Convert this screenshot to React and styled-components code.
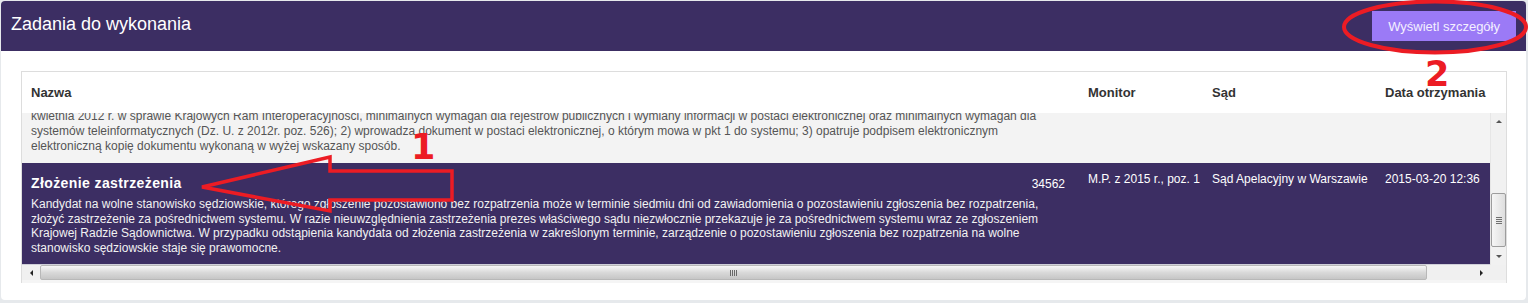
import styled, { createGlobalStyle } from "styled-components";

const GlobalStyle = createGlobalStyle`
    html, body {
        margin: 0;
        background: #e6e9ec;
        font-family: "Liberation Sans", Arial, sans-serif;
    }
`;

const previousRowLines = [
    "kwietnia 2012 r. w sprawie Krajowych Ram Interoperacyjności, minimalnych wymagań dla rejestrów publicznych i wymiany informacji w postaci elektronicznej oraz minimalnych wymagań dla",
    "systemów teleinformatycznych  (Dz. U. z 2012r. poz. 526); 2) wprowadza dokument w postaci elektronicznej, o którym mowa w pkt 1 do systemu; 3) opatruje podpisem elektronicznym",
    "elektroniczną kopię dokumentu wykonaną w wyżej wskazany sposób."
];

const selectedRow = {
    title: "Złożenie zastrzeżenia",
    number: "34562",
    monitor: "M.P. z 2015 r., poz. 1",
    court: "Sąd Apelacyjny w Warszawie",
    date: "2015-03-20 12:36",
    lines: [
        "Kandydat na wolne stanowisko sędziowskie, którego zgłoszenie pozostawiono bez rozpatrzenia może w terminie siedmiu dni od zawiadomienia o pozostawieniu zgłoszenia bez rozpatrzenia,",
        "złożyć zastrzeżenie za pośrednictwem systemu. W razie nieuwzględnienia zastrzeżenia prezes właściwego sądu niezwłocznie przekazuje je za pośrednictwem systemu wraz ze zgłoszeniem",
        "Krajowej Radzie Sądownictwa. W przypadku odstąpienia kandydata od złożenia zastrzeżenia w zakreślonym terminie, zarządzenie o pozostawieniu zgłoszenia bez rozpatrzenia na wolne",
        "stanowisko sędziowskie staje się prawomocne."
    ]
};

const App = () => {
    return (
        <Page>
            <GlobalStyle />
            <Panel>
                <Header>
                    <Title>Zadania do wykonania</Title>
                    <DetailsButton>Wyświetl szczegóły</DetailsButton>
                </Header>
                <Body>
                    <Table>
                        <HeadRow>
                            <HeadCell>Nazwa</HeadCell>
                            <HeadCell>Monitor</HeadCell>
                            <HeadCell>Sąd</HeadCell>
                            <HeadCell>Data otrzymania</HeadCell>
                        </HeadRow>
                        <Viewport>
                            <Rows>
                                <Row>
                                    <NameCell>
                                        {previousRowLines.map((line) => (
                                            <Line key={line}>{line}</Line>
                                        ))}
                                    </NameCell>
                                    <Cell />
                                    <Cell />
                                    <Cell />
                                </Row>
                                <Row selected>
                                    <NameCell selected>
                                        <NameTop>
                                            <RowTitle>{selectedRow.title}</RowTitle>
                                            <RowNumber>{selectedRow.number}</RowNumber>
                                        </NameTop>
                                        <Description>
                                            {selectedRow.lines.map((line) => (
                                                <Line key={line}>{line}</Line>
                                            ))}
                                        </Description>
                                    </NameCell>
                                    <Cell selected>{selectedRow.monitor}</Cell>
                                    <Cell selected>{selectedRow.court}</Cell>
                                    <Cell selected>{selectedRow.date}</Cell>
                                </Row>
                            </Rows>
                            <VScroll>
                                <ScrollButton>
                                    <Triangle dir="up" />
                                </ScrollButton>
                                <VTrack>
                                    <VThumb offset={63}>
                                        <Grip />
                                    </VThumb>
                                </VTrack>
                                <ScrollButton>
                                    <Triangle dir="down" />
                                </ScrollButton>
                            </VScroll>
                        </Viewport>
                        <HScrollRow>
                            <HScroll>
                                <HButton>
                                    <Triangle dir="left" />
                                </HButton>
                                <HThumb>
                                    <HGrip />
                                </HThumb>
                                <HTrack />
                                <HButton>
                                    <Triangle dir="right" />
                                </HButton>
                            </HScroll>
                            <Corner />
                        </HScrollRow>
                        <BottomStrip />
                    </Table>
                </Body>
            </Panel>

            <Annotations width="1528" height="303" viewBox="0 0 1528 303">
                <ellipse cx="1435" cy="27" rx="91" ry="25.5" fill="none" stroke="#ec1c24" strokeWidth="4" />
                <polygon
                    points="202,187 330,157 330,171 452,171 452,200 330,200 330,211"
                    fill="none"
                    stroke="#ec1c24"
                    strokeWidth="3.5"
                    strokeLinejoin="miter"
                />
            </Annotations>
            <Marker x={411} y={130}>1</Marker>
            <Marker x={1425} y={57}>2</Marker>
        </Page>
    );
};

export default App;

const Page = styled.div`
    position: relative;
    padding: 1px 2px 3px 1px;
    width: 1528px;
    height: 303px;
    box-sizing: border-box;
`;

const Panel = styled.div`
    background: #fff;
    border-radius: 4px;
    height: 299px;
    overflow: hidden;
`;

const Header = styled.div`
    height: 50px;
    background: #3c2e63;
    display: flex;
    align-items: center;
    justify-content: space-between;
    padding: 0 10px;
`;

const Title = styled.h1`
    margin: 0 0 4px;
    font-size: 18px;
    line-height: 22px;
    font-weight: normal;
    color: #fff;
`;

const DetailsButton = styled.button`
    height: 30px;
    padding: 0 16px;
    border: none;
    border-radius: 0;
    background: #9b7af6;
    color: #f4f0ff;
    font-family: "Liberation Sans", Arial, sans-serif;
    font-size: 13px;
    cursor: pointer;
`;

const Body = styled.div`
    padding: 20px 19px 17px 20px;
`;

const Table = styled.div`
    border: 1px solid #dddddd;
    border-bottom: none;
    background: #fff;
`;

const columns = "1057px 124px 173px 1fr";

const HeadRow = styled.div`
    display: grid;
    grid-template-columns: ${columns};
    height: 41px;
    align-items: center;
`;

const HeadCell = styled.div`
    padding: 0 9px;
    font-size: 13px;
    font-weight: bold;
    color: #333;
    white-space: nowrap;
`;

const Viewport = styled.div`
    display: flex;
    height: 152px;
`;

const Rows = styled.div`
    flex: 1;
    display: flex;
    flex-direction: column;
    justify-content: flex-end;
    overflow: hidden;
`;

const Row = styled.div`
    flex-shrink: 0;
    display: grid;
    grid-template-columns: ${columns};
    background: ${(p) => (p.selected ? "#3c2e63" : "#f3f3f3")};
    border-bottom: 1px solid ${(p) => (p.selected ? "#cfcfd8" : "#f3f3f3")};
    color: ${(p) => (p.selected ? "#fff" : "#555")};
`;

const NameCell = styled.div`
    padding: ${(p) => (p.selected ? "12px 14px 9px 9px" : "0 9px 8px 9px")};
    font-size: 12px;
    line-height: ${(p) => (p.selected ? "14.5px" : "15px")};
    white-space: nowrap;
    min-width: 0;
`;

const NameTop = styled.div`
    display: flex;
    align-items: baseline;
    justify-content: space-between;
`;

const RowTitle = styled.div`
    font-size: 14px;
    line-height: 17px;
    font-weight: bold;
    letter-spacing: 0.4px;
`;

const RowNumber = styled.div`
    font-size: 12px;
`;

const Description = styled.div`
    margin-top: 5px;
    color: #f2f2f2;
`;

const Line = styled.div``;

const Cell = styled.div`
    padding: 9px 9px 0;
    font-size: 12px;
    line-height: 15px;
    white-space: nowrap;
`;

const VScroll = styled.div`
    width: 16px;
    display: flex;
    flex-direction: column;
    background: #f1f1f1;
    border-left: 1px solid #e6e6e6;
    box-sizing: border-box;
`;

const ScrollButton = styled.div`
    height: 17px;
    display: flex;
    align-items: center;
    justify-content: center;
`;

const VTrack = styled.div`
    flex: 1;
`;

const VThumb = styled.div`
    margin-top: ${(p) => p.offset}px;
    height: 54px;
    border: 1px solid #9d9d9d;
    border-radius: 2px;
    background: linear-gradient(to right, #f6f6f6, #dedede);
    display: flex;
    align-items: center;
    justify-content: center;
    box-sizing: border-box;
`;

const Grip = styled.div`
    width: 6px;
    height: 7px;
    background: repeating-linear-gradient(to bottom, #707070 0 1px, transparent 1px 2px);
`;

const triangles = {
    up: "border-left: 3px solid transparent; border-right: 3px solid transparent; border-bottom: 3px solid #555;",
    down: "border-left: 3px solid transparent; border-right: 3px solid transparent; border-top: 3px solid #555;",
    left: "border-top: 3px solid transparent; border-bottom: 3px solid transparent; border-right: 3px solid #222;",
    right: "border-top: 3px solid transparent; border-bottom: 3px solid transparent; border-left: 3px solid #222;"
};

const Triangle = styled.span`
    width: 0;
    height: 0;
    ${(p) => triangles[p.dir]}
`;

const HScrollRow = styled.div`
    display: flex;
    height: 15px;
`;

const HScroll = styled.div`
    flex: 1;
    display: flex;
    background: #f0f0f0;
`;

const HButton = styled.div`
    width: 18px;
    display: flex;
    align-items: center;
    justify-content: center;
`;

const HThumb = styled.div`
    width: 1387px;
    border: 1px solid #b8b8b8;
    border-radius: 2px;
    background: linear-gradient(to bottom, #f7f7f7, #d9d9d9 50%, #c6c6c6);
    display: flex;
    align-items: center;
    justify-content: center;
    box-sizing: border-box;
`;

const HGrip = styled.div`
    width: 7px;
    height: 6px;
    background: repeating-linear-gradient(to right, #6a6a6a 0 1px, transparent 1px 2px);
`;

const HTrack = styled.div`
    flex: 1;
`;

const Corner = styled.div`
    width: 16px;
    background: #f0f0f0;
`;

const BottomStrip = styled.div`
    height: 3px;
    background: #f5f5f5;
`;

const Annotations = styled.svg`
    position: absolute;
    left: 0;
    top: 0;
    pointer-events: none;
`;

const Marker = styled.div`
    position: absolute;
    left: ${(p) => p.x}px;
    top: ${(p) => p.y}px;
    font-family: "DejaVu Sans", sans-serif;
    font-weight: bold;
    font-size: 35px;
    line-height: 1;
    color: #ec1c24;
`;
